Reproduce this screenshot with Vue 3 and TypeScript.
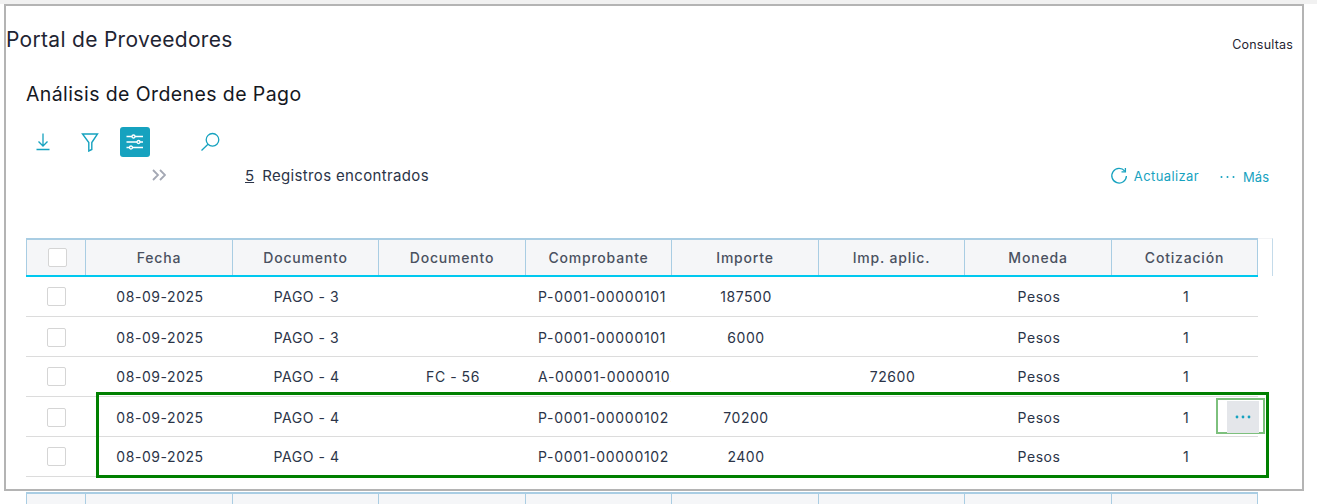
<script setup lang="ts">
interface Row {
  fecha: string
  doc: string
  aplica: string
  comprobante: string
  importe: string
  aplicado: string
}

const columns = ['Fecha', 'Documento', 'Documento', 'Comprobante', 'Importe', 'Imp. aplic.', 'Moneda', 'Cotización']

const rows: Row[] = [
  { fecha: '08-09-2025', doc: 'PAGO - 3', aplica: '', comprobante: 'P-0001-00000101', importe: '187500', aplicado: '' },
  { fecha: '08-09-2025', doc: 'PAGO - 3', aplica: '', comprobante: 'P-0001-00000101', importe: '6000', aplicado: '' },
  { fecha: '08-09-2025', doc: 'PAGO - 4', aplica: 'FC - 56', comprobante: 'A-00001-00000102', importe: '', aplicado: '72600' },
  { fecha: '08-09-2025', doc: 'PAGO - 4', aplica: '', comprobante: 'P-0001-00000102', importe: '70200', aplicado: '' },
  { fecha: '08-09-2025', doc: 'PAGO - 4', aplica: '', comprobante: 'P-0001-00000102', importe: '2400', aplicado: '' }
]
</script>

<template>
  <div class="page">
    <div class="frame">
      <div class="portal-bar">
        <h1 class="portal-title">Portal de Proveedores</h1>
        <span class="portal-link">Consultas</span>
      </div>

      <h2 class="page-title">Análisis de Ordenes de Pago</h2>

      <div class="toolbar">
        <button class="tool tool-download" aria-label="Descargar">
          <svg width="18" height="20" viewBox="0 0 18 20" fill="none" stroke="currentColor" stroke-width="1.3">
            <path d="M9 1.500V14M4.500 9.500 9 14l4.500-4.500M2.500 17.500h13" />
          </svg>
        </button>
        <button class="tool tool-filter" aria-label="Filtrar">
          <svg width="18" height="20" viewBox="0 0 18 20" fill="none" stroke="currentColor" stroke-width="1.400">
            <path d="M1.500 2h15L10.800 10.500V17.500L7.800 19V10.500Z" />
          </svg>
        </button>
        <button class="tool tool-active" aria-label="Ajustes">
          <svg width="18" height="18" viewBox="0 0 18 18" fill="none" stroke="#fff" stroke-width="1.300">
            <path d="M0.500 3.500h16.500M0.500 9h16.500M0.500 14.500h16.500" />
            <circle cx="7.500" cy="3.500" r="1.500" fill="#16a2bf" />
            <circle cx="12.500" cy="9" r="1.500" fill="#16a2bf" />
            <circle cx="5" cy="14.500" r="1.500" fill="#16a2bf" />
          </svg>
        </button>
        <button class="tool tool-search" aria-label="Buscar">
          <svg width="20" height="20" viewBox="0 0 20 20" fill="none" stroke="currentColor" stroke-width="1.300">
            <circle cx="12.500" cy="7.800" r="6.300" />
            <path d="M8 12.300 1.500 18.500" />
          </svg>
        </button>
      </div>

      <div class="status-bar">
        <svg class="chevrons" width="14" height="12" viewBox="0 0 14 12" fill="none" stroke="#a4a8b4" stroke-width="1.800">
          <path d="M1 1l5 5-5 5M8 1l5 5-5 5" />
        </svg>
        <span class="count">5</span>
        <span class="found">Registros encontrados</span>
        <div class="actions">
          <span class="action action-refresh">
            <svg width="18" height="18" viewBox="0 0 18 18" fill="none" stroke="currentColor" stroke-width="1.300">
              <path d="M14.800 4.200A7.300 7.300 0 1 0 16.400 9" />
              <path d="M15.400 1v3.900h-3.900" />
            </svg>
            Actualizar
          </span>
          <span class="action action-more">
            <svg width="15" height="4" viewBox="0 0 15 4" fill="currentColor">
              <circle cx="1.500" cy="2" r="1" />
              <circle cx="7.500" cy="2" r="1" />
              <circle cx="13.500" cy="2" r="1" />
            </svg>
            Más
          </span>
        </div>
      </div>

      <div class="table-wrap">
        <div class="grid-row head">
          <div class="cell check-cell"><span class="check"></span></div>
          <div v-for="(col, i) in columns" :key="i" class="cell">{{ col }}</div>
        </div>
        <span class="head-tail"></span>

        <div v-for="(row, i) in rows" :key="i" class="grid-row body-row">
          <div class="cell check-cell"><span class="check"></span></div>
          <div class="cell">{{ row.fecha }}</div>
          <div class="cell">{{ row.doc }}</div>
          <div class="cell">{{ row.aplica }}</div>
          <div class="cell cell-left">{{ row.comprobante }}</div>
          <div class="cell">{{ row.importe }}</div>
          <div class="cell">{{ row.aplicado }}</div>
          <div class="cell">Pesos</div>
          <div class="cell">1</div>
        </div>

        <div class="highlight"></div>
        <div class="row-menu">
          <span class="row-menu-btn">
            <svg width="16" height="4" viewBox="0 0 16 4" fill="#16a2bf">
              <circle cx="2" cy="2" r="1.400" />
              <circle cx="8" cy="2" r="1.400" />
              <circle cx="14" cy="2" r="1.400" />
            </svg>
          </span>
        </div>
      </div>
    </div>

    <div class="grid-row ghost-head">
      <div v-for="n in 9" :key="n" class="cell"></div>
    </div>
  </div>
</template>

<style>
html,
body {
  margin: 0;
  background: #fff;
  overflow: hidden;
}
</style>

<style scoped>
.page {
  height: 504px;
  padding-top: 4px;
  box-sizing: border-box;
  overflow: hidden;
  background: linear-gradient(#f1f1f1 0, #f1f1f1 4px, #fff 4px);
  font-family: Inter, "Noto Sans", sans-serif;
  color: #2b3448;
}

.frame {
  box-sizing: border-box;
  width: 1300px;
  height: 487px;
  margin-left: 4px;
  border: 2px solid #b4b4b4;
  background: #fff;
}

.portal-bar {
  display: flex;
  justify-content: space-between;
  align-items: center;
  height: 26px;
  margin-top: 20px;
  padding: 0 9px 0 0;
}

.portal-title {
  margin: 0;
  font-size: 21px;
  font-weight: 400;
  letter-spacing: 0.3px;
  color: #1f2533;
}

.portal-link {
  margin-top: 10px;
  font-size: 12.500px;
  letter-spacing: 0.2px;
  color: #1f2533;
}

.page-title {
  margin: 30px 0 0 20px;
  font-size: 19.500px;
  line-height: 24px;
  font-weight: 400;
  letter-spacing: 0.4px;
  color: #15181f;
}

.toolbar {
  display: flex;
  align-items: center;
  height: 30px;
  margin: 21px 0 0 20px;
}

.tool {
  display: flex;
  align-items: center;
  justify-content: center;
  padding: 0;
  border: none;
  background: none;
  color: #16a2bf;
}

.tool-download {
  width: 18px;
  margin-left: 8px;
}

.tool-filter {
  width: 18px;
  margin-left: 29px;
}

.tool-active {
  width: 30px;
  height: 30px;
  margin-left: 21px;
  border-radius: 3px;
  background: #16a2bf;
}

.tool-search {
  width: 20px;
  margin-left: 50px;
}

.status-bar {
  display: flex;
  align-items: center;
  height: 24px;
  margin-top: 6px;
  padding-left: 146px;
  font-size: 15px;
}

.count {
  margin-left: 79px;
  text-decoration: underline;
}

.found {
  margin-left: 8px;
  letter-spacing: 0.35px;
}

.actions {
  display: flex;
  align-items: center;
  margin-left: auto;
  padding-right: 33px;
  color: #16a2bf;
  font-size: 13px;
}

.action {
  display: flex;
  align-items: center;
}

.action-refresh {
  gap: 6px;
  letter-spacing: 0.4px;
  margin-top: 2px;
}

.action-more {
  gap: 8px;
  margin-left: 21px;
  margin-top: 4px;
}

.table-wrap {
  position: relative;
  width: 1232px;
  margin: 51px 0 0 20px;
}

.grid-row {
  display: grid;
  grid-template-columns: 59px 147px 146px 147px 146px 147px 146px 147px 147px;
}

.cell {
  display: flex;
  align-items: center;
  justify-content: center;
  min-width: 0;
  overflow: hidden;
  white-space: nowrap;
  font-size: 14px;
  letter-spacing: 0.55px;
}

.body-row .cell {
  padding-left: 3px;
}

.body-row .cell.cell-left {
  justify-content: flex-start;
  padding-left: 13px;
  letter-spacing: 0.7px;
}

.head {
  box-sizing: border-box;
  height: 39px;
  border-top: 2px solid #a9cde3;
  border-bottom: 2px solid #00c8ef;
  background: #f5f6f8;
}

.head .cell {
  border-left: 1px solid #a9cde3;
  box-sizing: border-box;
  font-weight: 500;
  letter-spacing: 0.8px;
  color: #4a5160;
}

.head .cell:last-child {
  border-right: 1px solid #a9cde3;
}

.head-tail {
  position: absolute;
  top: 0;
  left: 1232px;
  box-sizing: content-box;
  width: 14px;
  height: 37px;
  border-top: 1px solid #f3f4f6;
  border-right: 1px solid #c4dbea;
}

.body-row {
  box-sizing: border-box;
  height: 40px;
  border-bottom: 1px solid #dcdcdc;
}

.body-row:nth-child(even) .cell {
  padding-top: 2px;
}

.body-row .cell.check-cell {
  padding-left: 21px;
}

.check-cell {
  justify-content: flex-start;
  padding-left: 21px;
}

.check {
  display: block;
  box-sizing: border-box;
  width: 19px;
  height: 19px;
  border: 1px solid #d5d5d5;
  border-radius: 2px;
  background: #fff;
}

.highlight {
  position: absolute;
  top: 154px;
  left: 70px;
  box-sizing: border-box;
  width: 1173px;
  height: 86px;
  border: 3px solid #008000;
}

.row-menu {
  position: absolute;
  top: 160px;
  left: 1190px;
  display: flex;
  justify-content: flex-end;
  box-sizing: border-box;
  width: 49px;
  height: 36px;
  padding: 1px 4px 0 0;
  border: 2px solid #7dc07d;
}

.row-menu-btn {
  display: flex;
  align-items: center;
  justify-content: center;
  width: 32px;
  height: 32px;
  background: #e4e6ea;
}

.ghost-head {
  box-sizing: border-box;
  width: 1232px;
  height: 40px;
  margin: 1px 0 0 26px;
  border-top: 2px solid #a9cde3;
  background: #f5f6f8;
}

.ghost-head .cell {
  box-sizing: border-box;
  border-left: 1px solid #a9cde3;
}

.ghost-head .cell:last-child {
  border-right: 1px solid #a9cde3;
}
</style>
